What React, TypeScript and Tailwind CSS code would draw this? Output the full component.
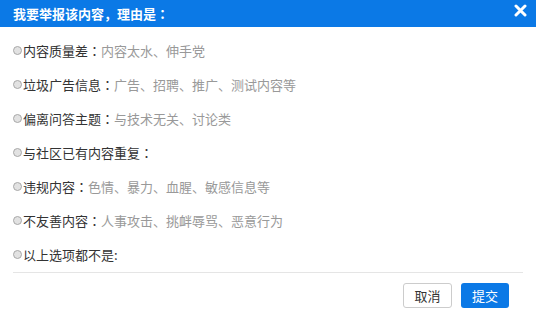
const reasons: { label: string; desc?: string; colon?: boolean }[] = [
  { label: '内容质量差', desc: '内容太水、伸手党', colon: true },
  { label: '垃圾广告信息', desc: '广告、招聘、推广、测试内容等', colon: true },
  { label: '偏离问答主题', desc: '与技术无关、讨论类', colon: true },
  { label: '与社区已有内容重复', colon: true },
  { label: '违规内容', desc: '色情、暴力、血腥、敏感信息等', colon: true },
  { label: '不友善内容', desc: '人事攻击、挑衅辱骂、恶意行为', colon: true },
  { label: '以上选项都不是:' },
];

// full-width colon drawn centred in its cell
const Colon = () => (
  <span style={{ fontFamily: '"Noto Sans CJK TC", sans-serif' }}>：</span>
);

const App = () => {
  return (
    <div
      className="w-[536px] h-[319px] bg-white flex flex-col overflow-hidden"
      style={{ fontFamily: '"Microsoft YaHei", "Noto Sans CJK SC", sans-serif' }}
    >
      <div className="h-[27px] bg-[#0b79e6] flex items-center justify-between pl-[13px] pr-[9px] shrink-0">
        <span className="text-white text-[13px] font-bold leading-none">
          我要举报该内容，理由是<Colon />
        </span>
        <svg width="13" height="13" viewBox="0 0 13 13" className="-mt-[6px]">
          <path d="M2 2 L11 11 M11 2 L2 11" stroke="white" strokeWidth="3" strokeLinecap="round" />
        </svg>
      </div>
      <div className="flex flex-col pt-[6px] pl-[13px] pr-[13px]">
        {reasons.map((r) => (
          <label key={r.label} className="h-[34px] flex items-center text-[13px] leading-none cursor-pointer">
            <span className="w-[9px] h-[9px] rounded-full border border-[#a8a8a8] bg-[#e2e2e2] mr-[1px] shrink-0" />
            <span className="text-[#333]">
              {r.label}
              {r.colon && <Colon />}
            </span>
            {r.desc && <span className="text-[#999]">{r.desc}</span>}
          </label>
        ))}
        <div className="h-px bg-[#e5e5e5] mt-px" />
      </div>
      <div className="flex justify-end gap-[9px] pt-[10px] pr-[27px]">
        <button className="w-[49px] h-[25px] border border-[#ccc] rounded-[3px] bg-white text-[#333] text-[13px]">
          取消
        </button>
        <button className="w-[48px] h-[25px] rounded-[3px] bg-[#0b79e6] text-white text-[13px]">
          提交
        </button>
      </div>
    </div>
  );
};

export default App;
